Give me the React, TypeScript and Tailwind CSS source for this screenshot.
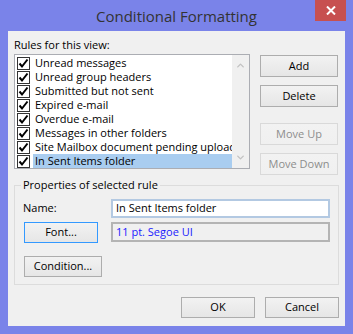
import { ChevronUp, ChevronDown } from 'lucide-react';

const rules = [
  'Unread messages',
  'Unread group headers',
  'Submitted but not sent',
  'Expired e-mail',
  'Overdue e-mail',
  'Messages in other folders',
  'Site Mailbox document pending upload',
  'In Sent Items folder',
];

const Check = () => (
  <div className="w-[13px] h-[13px] shrink-0 border border-[#333333] bg-white flex items-center justify-center">
    <svg width="11" height="11" viewBox="0 0 11 11">
      <path d="M1.5 5.5 L4 8.5 L9.5 1.5" stroke="#000" strokeWidth="2" fill="none" />
    </svg>
  </div>
);

const Btn = ({ label, w, h, disabled, focus, className }: any) => (
  <div
    className={`flex items-center justify-center border bg-gradient-to-b from-[#f2f2f2] to-[#e6e6e6] ${
      disabled ? 'border-[#d9d9d9] text-[#8d8d8d] from-[#f0f0f0] to-[#f0f0f0]' : focus ? 'border-[#3399ff] text-black' : 'border-[#adadad] text-black'
    } ${className || ''}`}
    style={{ width: w, height: h }}
  >
    {label}
  </div>
);

const App = () => {
  return (
    <div className="w-[353px] h-[334px] bg-[#7a83e9] font-['Segoe_UI','Open_Sans',sans-serif] text-[11px] text-black overflow-hidden">
      {/* title bar */}
      <div className="relative h-[31px] flex items-center justify-center">
        <span className="text-[15px] text-[#333333] pt-[1px]">Conditional Formatting</span>
        <div className="absolute right-[7px] top-0 w-[31px] h-[21px] bg-[#c75050] flex items-center justify-center">
          <svg width="10" height="9" viewBox="0 0 10 9">
            <path d="M1 0.5 L9 8.5 M9 0.5 L1 8.5" stroke="#fff" strokeWidth="2" />
          </svg>
        </div>
      </div>

      <div className="ml-[8px] w-[337px] h-[295px] bg-[#f0f0f0] pt-[6px]">
        <div className="ml-[6px] h-[16px] leading-[16px]">Rules for this view:</div>

        <div className="flex items-start mt-[1px]">
          {/* list */}
          <div className="ml-[6px] w-[236px] h-[115px] border border-[#abadb3] bg-white flex">
            <div className="flex-1 pt-[1px] overflow-hidden">
              {rules.map((r, i) => (
                <div key={r} className="h-[14px] flex items-center pl-[2px]">
                  <Check />
                  <div
                    className={`ml-[3px] pl-[2px] h-[14px] leading-[14px] whitespace-nowrap flex-1 ${
                      i === rules.length - 1 ? 'bg-[#a9cdf0]' : ''
                    }`}
                  >
                    {r}
                  </div>
                </div>
              ))}
            </div>
            <div className="w-[17px] bg-[#f0f0f0] flex flex-col justify-between items-center py-[5px] text-[#c2c2c2]">
              <ChevronUp size={11} strokeWidth={3} />
              <ChevronDown size={11} strokeWidth={3} />
            </div>
          </div>

          {/* buttons */}
          <div className="ml-[10px] mt-[1px] flex flex-col">
            <Btn label="Add" w={78} h={22} />
            <Btn label="Delete" w={78} h={22} className="mt-[8px]" />
            <Btn label="Move Up" w={78} h={22} disabled className="mt-[16px]" />
            <Btn label="Move Down" w={78} h={22} disabled className="mt-[8px]" />
          </div>
        </div>

        {/* group box */}
        <div className="ml-[6px] mt-[10px] w-[325px] h-[100px] border border-[#dcdcdc] flex flex-col">
          <div className="-mt-[9px] ml-[6px] self-start px-[2px] h-[16px] leading-[16px] bg-[#f0f0f0]">
            Properties of selected rule
          </div>
          <div className="mt-[6px] ml-[8px] flex items-center">
            <div className="w-[88px]">Name:</div>
            <div className="w-[219px] h-[19px] border-2 border-[#b3c9e2] bg-white flex items-center pl-[3px]">
              In Sent Items folder
            </div>
          </div>
          <div className="mt-[4px] ml-[8px] flex items-start">
            <div className="w-[88px] pl-[1px]">
              <Btn label="Font..." w={74} h={21} focus />
            </div>
            <div className="w-[219px] h-[20px] border-2 border-[#b4b4b4] bg-[#f0f0f0] flex items-center pl-[3px] text-[#1a1aff]">
              11 pt. Segoe UI
            </div>
          </div>
          <div className="mt-[13px] ml-[9px]">
            <Btn label="Condition..." w={78} h={21} />
          </div>
        </div>

        {/* bottom buttons */}
        <div className="mt-[12px] flex justify-end pr-[6px] gap-[10px]">
          <Btn label="OK" w={74} h={21} />
          <Btn label="Cancel" w={74} h={21} />
        </div>
      </div>
    </div>
  );
};

export default App;
